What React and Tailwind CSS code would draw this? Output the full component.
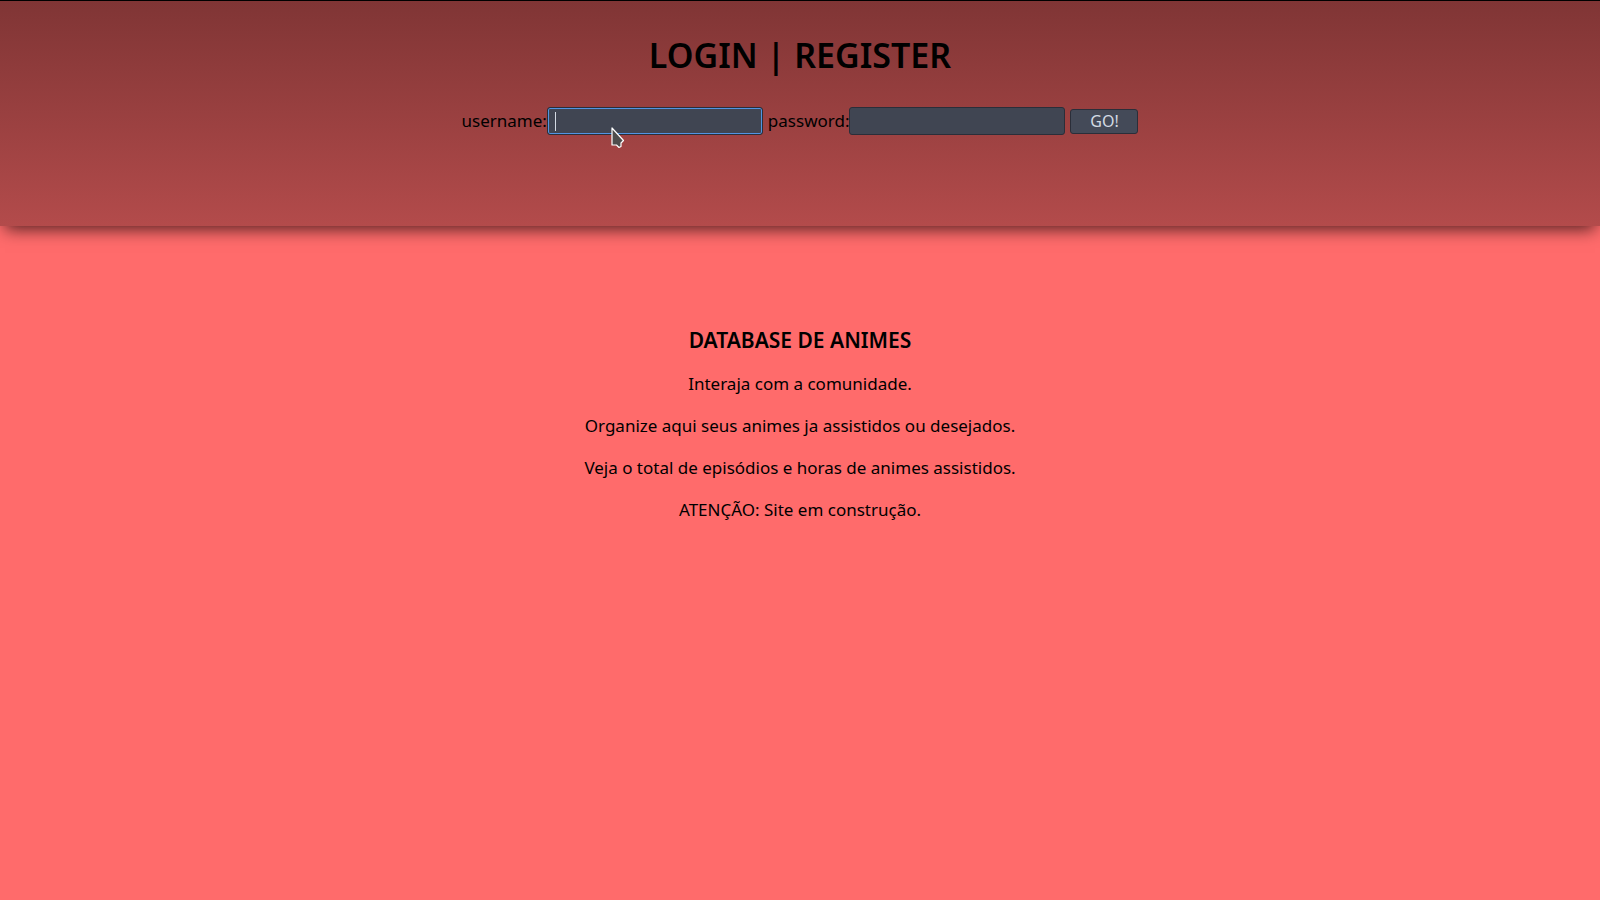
import { useState } from "react";

const lines = [
  "Interaja com a comunidade.",
  "Organize aqui seus animes ja assistidos ou desejados.",
  "Veja o total de episódios e horas de animes assistidos.",
  "ATENÇÃO: Site em construção.",
];

function Field({ id, label, type, className }) {
  return (
    <div className="flex items-center">
      <label htmlFor={id}>{label}</label>
      <input
        id={id}
        name={id}
        type={type}
        className={
          "h-7 w-54 rounded-[3px] border border-[#2b2e39] bg-[#404552] px-2 text-base text-[#d3dae3] outline-none " +
          className
        }
      />
    </div>
  );
}

function Pointer() {
  return (
    <svg
      viewBox="0 0 14 22"
      aria-hidden="true"
      className="pointer-events-none absolute top-5 left-16 h-[22px] w-[14px]"
    >
      <path
        d="M1 1 V18 H5.5 L8 20.5 L10 19.5 V16 L12.5 13.5 Z"
        fill="#4d4d4d"
        stroke="#fff"
        strokeWidth="1.2"
        strokeLinejoin="round"
      />
    </svg>
  );
}

export default function App() {
  const [sent, setSent] = useState(false);
  return (
    <div className="min-h-screen bg-[#ff6b6b] font-['Noto_Sans',sans-serif] text-[17px] text-black">
      <header className="border-t border-black bg-linear-to-b from-[#803535] to-[#b34b4b] px-4 pt-8 pb-[91px] shadow-[0_8px_16px_-5px_rgba(0,0,0,0.7)]">
        <h1 className="text-center text-[34px] leading-11 font-semibold">LOGIN | REGISTER</h1>
        <form
          className="mt-[30px] flex flex-wrap items-center justify-center gap-[5px]"
          onSubmit={(e) => {
            e.preventDefault();
            setSent(true);
          }}
          data-sent={sent}
        >
          <div className="relative">
            <Field
              id="username"
              label="username:"
              type="text"
              className="ring-1 ring-[#5294e2] ring-inset"
            />
            <div aria-hidden="true" className="pointer-events-none absolute top-0 right-0 h-7 w-54">
              <div className="mt-[5px] ml-2 h-[19px] w-px bg-[#d3dae3]" />
              <Pointer />
            </div>
          </div>
          <Field id="password" label="password:" type="password" className="" />
          <button
            type="submit"
            className="h-[25px] w-17 rounded-[3px] border border-[#2b2e39] bg-[#444a58] text-base leading-5 text-[#d3dae3]"
          >
            GO!
          </button>
        </form>
      </header>
      <main className="px-4 pt-25 text-center">
        <h2 className="mb-[18px] text-[21px] leading-7 font-semibold">DATABASE DE ANIMES</h2>
        <div className="flex flex-col gap-[18px] leading-6">
          {lines.map((line) => (
            <p key={line}>{line}</p>
          ))}
        </div>
      </main>
    </div>
  );
}
